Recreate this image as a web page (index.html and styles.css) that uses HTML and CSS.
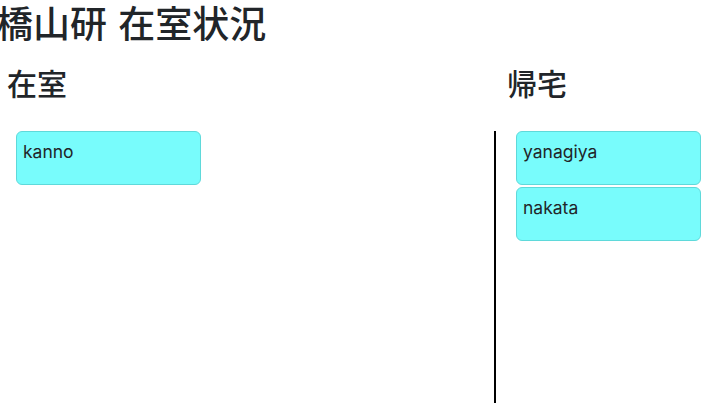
FILE: index.html
```html
<!DOCTYPE html>
<html lang="ja">
<head>
<meta charset="utf-8">
<title>橋山研 在室状況</title>
<link rel="stylesheet" href="styles.css">
</head>
<body>
<h1 class="title">橋山研 在室状況</h1>
<div class="board">
  <section class="column column-in">
    <h2 class="column-title">在室</h2>
    <div class="list list-in">
      <div class="card">kanno</div>
    </div>
  </section>
  <section class="column column-out">
    <h2 class="column-title">帰宅</h2>
    <div class="list list-out">
      <div class="card">yanagiya</div>
      <div class="card">nakata</div>
    </div>
  </section>
</div>
</body>
</html>
```
FILE: styles.css
```css
html, body {
  margin: 0;
  padding: 0;
  background: #ffffff;
  color: #212529;
  font-family: Inter, "Noto Sans CJK JP", sans-serif;
  overflow: hidden;
}

.title {
  margin: 0 0 0 -4px;
  padding: 2px 0 0 0;
  font-family: "Noto Sans CJK JP", sans-serif;
  font-size: 37px;
  font-weight: 500;
  line-height: 40px;
  word-spacing: 3px;
  white-space: nowrap;
}

.board {
  display: grid;
  grid-template-columns: 496px 1fr;
}

.column-title {
  margin: 0;
  padding: 22px 0 0 7px;
  font-family: "Noto Sans CJK JP", sans-serif;
  font-size: 30px;
  font-weight: 500;
  line-height: 36px;
}

.column-out .column-title {
  padding-left: 11px;
}

.list {
  margin-top: 31px;
  min-height: 272px;
  display: flex;
  flex-direction: column;
  gap: 2px;
}

.list-in {
  padding-left: 16px;
  border-right: 2px solid #000000;
}

.list-out {
  padding-left: 20px;
}

.card {
  box-sizing: border-box;
  width: 185px;
  height: 54px;
  padding: 8px 6px;
  background: #78fcfc;
  border: 1px solid #5fd9da;
  border-radius: 6px;
  font-size: 17.5px;
  line-height: 24px;
}
```
